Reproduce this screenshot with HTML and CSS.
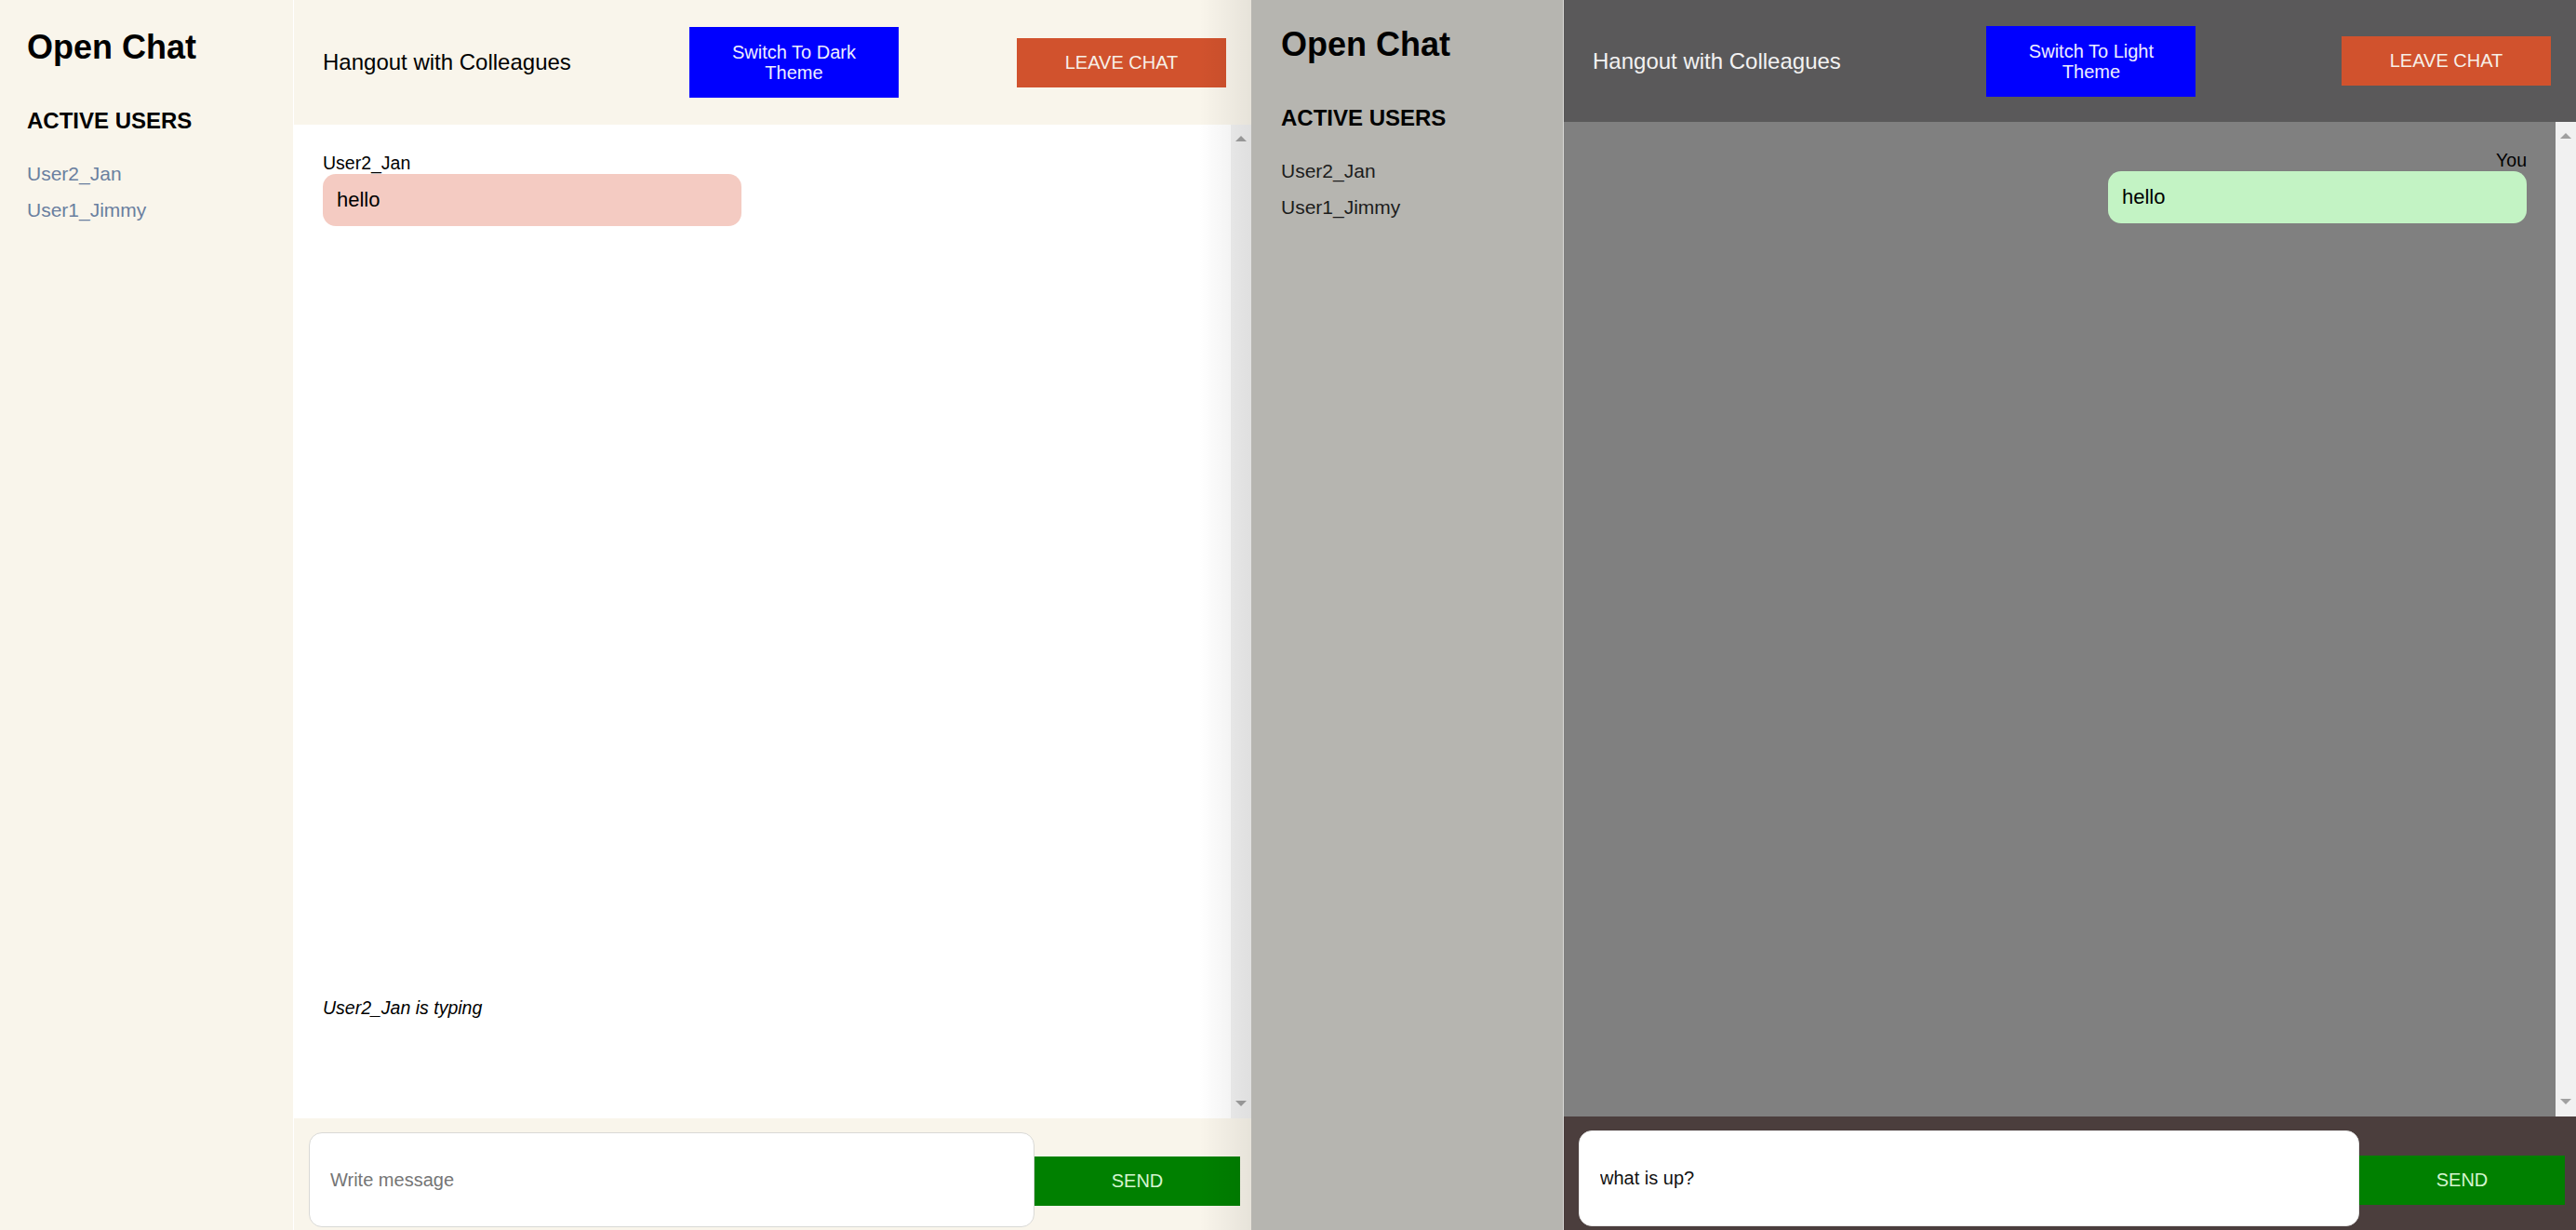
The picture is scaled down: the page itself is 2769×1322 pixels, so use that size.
FILE: index.html
```html
<!DOCTYPE html>
<html lang="en">
<head>
<meta charset="utf-8">
<title>Open Chat</title>
<link rel="stylesheet" href="styles.css">
</head>
<body>
<div class="screen">
  <section class="app app-light">
    <aside class="sidebar">
      <h1 class="brand">Open Chat</h1>
      <h2 class="users-title">ACTIVE USERS</h2>
      <ul class="users">
        <li>User2_Jan</li>
        <li>User1_Jimmy</li>
      </ul>
    </aside>
    <main class="chat">
      <header class="chat-header">
        <h2 class="room">Hangout with Colleagues</h2>
        <button class="theme-btn">Switch To Dark Theme</button>
        <button class="leave-btn">LEAVE CHAT</button>
      </header>
      <div class="messages-wrap">
        <div class="messages">
          <div class="msg msg-in">
            <div class="msg-user">User2_Jan</div>
            <div class="bubble">hello</div>
          </div>
          <div class="typing">User2_Jan is typing</div>
        </div>
        <div class="scrollbar"><span class="arrow arrow-up"></span><span class="arrow arrow-down"></span></div>
      </div>
      <form class="composer">
        <input class="msg-input" type="text" placeholder="Write message">
        <button class="send-btn" type="button">SEND</button>
      </form>
    </main>
  </section>

  <section class="app app-dark">
    <aside class="sidebar">
      <h1 class="brand">Open Chat</h1>
      <h2 class="users-title">ACTIVE USERS</h2>
      <ul class="users">
        <li>User2_Jan</li>
        <li>User1_Jimmy</li>
      </ul>
    </aside>
    <main class="chat">
      <header class="chat-header">
        <h2 class="room">Hangout with Colleagues</h2>
        <button class="theme-btn">Switch To Light Theme</button>
        <button class="leave-btn">LEAVE CHAT</button>
      </header>
      <div class="messages-wrap">
        <div class="messages">
          <div class="msg msg-out">
            <div class="msg-user">You</div>
            <div class="bubble">hello</div>
          </div>
        </div>
        <div class="scrollbar"><span class="arrow arrow-up"></span><span class="arrow arrow-down"></span></div>
      </div>
      <form class="composer">
        <input class="msg-input" type="text" value="what is up?">
        <button class="send-btn" type="button">SEND</button>
      </form>
    </main>
  </section>
</div>
</body>
</html>
```

FILE: styles.css
```css
html, body {
  margin: 0;
  padding: 0;
}

body {
  font-family: "Liberation Sans", Arial, sans-serif;
  color: #000;
  overflow: hidden;
}

.screen {
  display: flex;
  width: 2769px;
  height: 1322px;
  overflow: hidden;
}

.app {
  display: flex;
  height: 1322px;
  position: relative;
  flex: none;
}

.app-light { width: 1345px; }
.app-dark { width: 1424px; }

/* soft shadow cast by the right window over the left one */
.app-light::after {
  content: "";
  position: absolute;
  top: 0;
  right: 0;
  bottom: 0;
  width: 56px;
  background: linear-gradient(to right, rgba(0, 0, 0, 0), rgba(0, 0, 0, 0.075));
  pointer-events: none;
}

/* ---------- sidebar ---------- */
.sidebar {
  box-sizing: border-box;
  flex: none;
  height: 100%;
}

.app-light .sidebar {
  width: 316px;
  padding: 30px 0 0 29px;
  background: #f9f5eb;
  border-right: 1px solid #ffffff;
}

.app-dark .sidebar {
  width: 336px;
  padding: 27px 0 0 32px;
  background: #b6b5b0;
  border-right: 1px solid #d9d9d6;
}

.brand {
  margin: 0;
  font-size: 36px;
  line-height: 42px;
  font-weight: bold;
}

.users-title {
  margin: 44px 0 0;
  font-size: 24px;
  line-height: 28px;
  font-weight: bold;
}

.users {
  list-style: none;
  margin: 31px 0 0;
  padding: 0;
  display: flex;
  flex-direction: column;
  gap: 15px;
}

.users li {
  font-size: 21px;
  line-height: 24px;
}

.app-light .users li { color: #6a7f9f; }
.app-dark .users li { color: #1c1c1c; }

/* ---------- chat column ---------- */
.chat {
  flex: 1;
  min-width: 0;
  display: flex;
  flex-direction: column;
  height: 100%;
}

.chat-header {
  box-sizing: border-box;
  flex: none;
  display: flex;
  align-items: center;
  justify-content: space-between;
  padding: 0 27px 0 31px;
}

.app-light .chat-header { height: 134px; background: #f9f5eb; }
.app-dark .chat-header { height: 131px; background: #5a595a; }

.room {
  margin: 0;
  font-size: 24px;
  font-weight: normal;
  line-height: 28px;
}

.app-light .room { color: #000; }
.app-dark .room { color: #f2f2f2; }

.theme-btn,
.leave-btn,
.send-btn {
  border: none;
  border-radius: 0;
  font-family: "Liberation Sans", Arial, sans-serif;
  font-size: 20px;
  color: #f7efe6;
  cursor: pointer;
  flex: none;
}

.theme-btn {
  width: 225px;
  height: 76px;
  padding: 0 38px;
  line-height: 22px;
  background: #0000ff;
  color: #eeeeff;
}

.leave-btn {
  width: 225px;
  height: 53px;
  background: #d1522d;
}

.messages-wrap {
  flex: 1;
  min-height: 0;
  display: flex;
}

.app-light .messages-wrap { background: #ffffff; }
.app-dark .messages-wrap { background: #808080; }

.messages {
  flex: 1;
  display: flex;
  flex-direction: column;
  padding: 30px 31px 0 31px;
}

.msg {
  display: flex;
  flex-direction: column;
  align-items: flex-start;
  flex: 1;
}

.msg-out {
  align-items: flex-end;
}

.msg-user {
  font-size: 19.5px;
  line-height: 23px;
}

.bubble {
  box-sizing: border-box;
  width: 450px;
  height: 56px;
  border-radius: 14px;
  padding: 0 15px;
  display: flex;
  align-items: center;
  font-size: 22px;
}

.msg-in .bubble { background: #f4cbc2; }
.msg-out .bubble { background: #c3f3c4; }

.typing {
  font-size: 19.5px;
  line-height: 23px;
  font-style: italic;
  margin-bottom: 107px;
}

.scrollbar {
  flex: none;
  width: 22px;
  background: #f1f1f1;
  display: flex;
  flex-direction: column;
  justify-content: space-between;
  align-items: center;
  padding: 12px 0 13px;
  box-sizing: border-box;
}

.arrow {
  width: 0;
  height: 0;
  border-left: 6px solid transparent;
  border-right: 6px solid transparent;
}

.arrow-up { border-bottom: 6px solid #a0a0a0; }
.arrow-down { border-top: 6px solid #a0a0a0; }

/* ---------- composer ---------- */
.composer {
  box-sizing: border-box;
  flex: none;
  margin: 0;
  display: flex;
  align-items: center;
  padding: 15px 12px 0 16px;
}

.app-light .composer { height: 120px; background: #f9f5eb; }
.app-dark .composer { height: 122px; background: #4b3e3d; }

.msg-input {
  flex: 1;
  min-width: 0;
  box-sizing: border-box;
  border-radius: 14px;
  background: #ffffff;
  font-family: "Liberation Sans", Arial, sans-serif;
  font-size: 20px;
  color: #111;
  padding: 0 22px;
  outline: none;
  align-self: flex-start;
}

.app-light .msg-input { height: 102px; border: 1px solid #d9d9d6; }
.app-dark .msg-input { height: 103px; border: 1px solid #e8e8e8; }

.msg-input::placeholder { color: #757575; }

.send-btn {
  width: 221px;
  height: 53px;
  background: #008000;
  color: #d4f5cf;
}
```
